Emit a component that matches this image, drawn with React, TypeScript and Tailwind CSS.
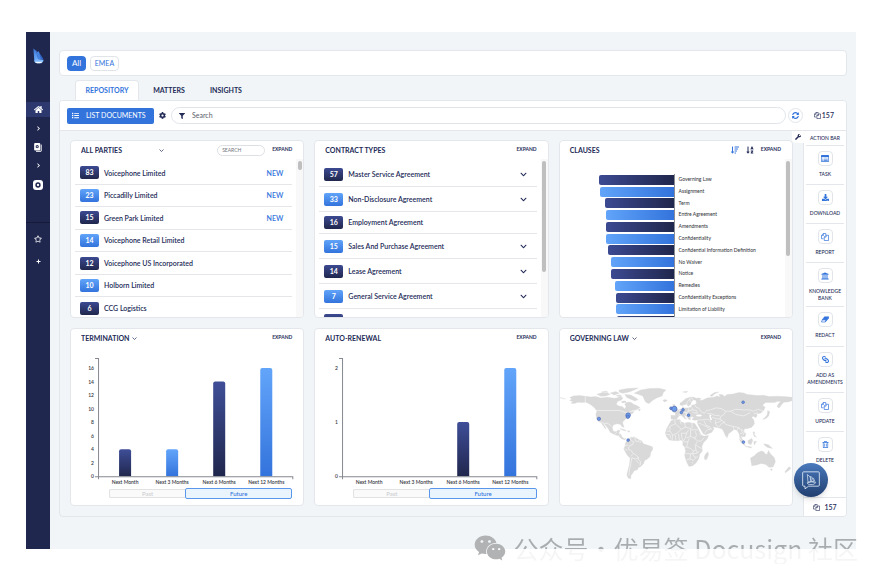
import type { ReactNode } from "react";
import clsx from "clsx";
import {
  FaChevronDown,
  FaChevronRight,
  FaCog,
  FaDownload,
  FaFilter,
  FaHome,
  FaLink,
  FaList,
  FaRegStar,
  FaRegTrashAlt,
  FaSortAlphaDown,
  FaSortAmountDown,
  FaSyncAlt,
  FaUniversity,
  FaWeixin,
  FaWrench,
} from "react-icons/fa";

interface ListItem {
  count: number;
  name: string;
  isNew?: boolean;
  expandable?: boolean;
}

const parties: ListItem[] = [
  { count: 83, name: "Voicephone Limited", isNew: true },
  { count: 23, name: "Piccadilly Limited", isNew: true },
  { count: 15, name: "Green Park Limited", isNew: true },
  { count: 14, name: "Voicephone Retail Limited" },
  { count: 12, name: "Voicephone US Incorporated" },
  { count: 10, name: "Holborn Limited" },
  { count: 6, name: "CCG Logistics" },
];

const contractTypes: ListItem[] = [
  { count: 57, name: "Master Service Agreement", expandable: true },
  { count: 33, name: "Non-Disclosure Agreement", expandable: true },
  { count: 16, name: "Employment Agreement" },
  { count: 15, name: "Sales And Purchase Agreement", expandable: true },
  { count: 14, name: "Lease Agreement", expandable: true },
  { count: 7, name: "General Service Agreement", expandable: true },
];

const clauses = [
  { name: "Governing Law", value: 75 },
  { name: "Assignment", value: 74 },
  { name: "Term", value: 69 },
  { name: "Entire Agreement", value: 68 },
  { name: "Amendments", value: 68 },
  { name: "Confidentiality", value: 68 },
  { name: "Confidential Information Definition", value: 66 },
  { name: "No Waiver", value: 63 },
  { name: "Notice", value: 63 },
  { name: "Remedies", value: 59 },
  { name: "Confidentiality Exceptions", value: 58 },
  { name: "Limitation of Liability", value: 58 },
  { name: "", value: 57 },
];

const months = ["Next Month", "Next 3 Months", "Next 6 Months", "Next 12 Months"];

function CopyIcon({ className }: { className?: string }) {
  return (
    <svg viewBox="0 0 16 16" className={className} fill="none" stroke="currentColor" strokeWidth="1.4" strokeLinejoin="round">
      <path d="M5 11.5H1V5l3.5-4H9.500v3M4.800 1v4.200H1" />
      <path d="M6.500 8 10 4.500h5V15H6.500zM10.200 4.500V8.200H6.500" />
    </svg>
  );
}

function TaskIcon({ className }: { className?: string }) {
  return (
    <svg viewBox="0 0 16 14" className={className} fill="currentColor">
      <path fillRule="evenodd" d="M1.500 0h13A1.500 1.500 0 0 1 16 1.500v11a1.500 1.500 0 0 1-1.500 1.500h-13A1.500 1.500 0 0 1 0 12.500v-11A1.500 1.500 0 0 1 1.500 0zM1.300 4v8.600h13.400V4z" />
      <path d="M2.500 5.500H4v1.200H2.500zM5 5.500h8.500v1.200H5zM2.500 7.800H4V9H2.500zM5 7.800h8.500V9H5zM2.500 10.100H4v1.200H2.500zM5 10.100h8.500v1.200H5z" />
    </svg>
  );
}

function EraserIcon({ className }: { className?: string }) {
  return (
    <svg viewBox="0 0 16 14" className={className} fill="currentColor" stroke="currentColor" strokeLinejoin="round">
      <path d="M7 1.500H15L10.500 7.500H2.500z" />
      <path d="M2.500 7.500H10.500L8.500 12H1z" fill="none" strokeWidth="1.400" />
      <path d="M15 1.500V5L8.500 12 10.500 7.500z" />
    </svg>
  );
}

function BoatLogo() {
  return (
    <svg viewBox="0 0 32 46" className="h-4 w-[11px]" aria-label="Home">
      <defs>
        <linearGradient id="sail" x1="0" y1="0" x2="0" y2="1">
          <stop offset="0" stopColor="#3a72d4" />
          <stop offset="1" stopColor="#6fb1ff" />
        </linearGradient>
      </defs>
      <path d="M1 1 9 8 16 33 4 37z" fill="url(#sail)" />
      <path d="M9 7 13 11 17 9 20 18 25 31 15 34z" fill="#4682e0" />
      <path d="M19 16 24 22 31 34 23 33z" fill="#3068cc" />
      <path d="M3 36C11 31 22 32 31 35 29 41 26 44 20 44H12C7 44 4 41 3 36z" fill="#7db8ff" />
      <path d="M6 40H27C25 43 23 44 20 44H12C9 44 7 42 6 40z" fill="#f4f9ff" />
    </svg>
  );
}

const actions: { label: string; icon: ReactNode; height: string }[] = [
  { label: "TASK", icon: <TaskIcon className="h-[7px] w-2" />, height: "h-[39px]" },
  { label: "DOWNLOAD", icon: <FaDownload className="size-[7px]" />, height: "h-[39px]" },
  { label: "REPORT", icon: <CopyIcon className="size-2" />, height: "h-[39px]" },
  { label: "KNOWLEDGE BANK", icon: <FaUniversity className="size-2" />, height: "h-[44px]" },
  { label: "REDACT", icon: <EraserIcon className="h-[7px] w-2" />, height: "h-[40px]" },
  { label: "ADD AS AMENDMENTS", icon: <FaLink className="size-[7px] rotate-90" />, height: "h-[46px]" },
  { label: "UPDATE", icon: <CopyIcon className="size-2" />, height: "h-[39px]" },
  { label: "DELETE", icon: <FaRegTrashAlt className="size-[7px]" />, height: "h-[39px]" },
];

function Sidebar() {
  return (
    <nav className="flex w-6 shrink-0 flex-col items-center bg-[#20274f] text-white">
      <a href="#home" className="mt-4">
        <BoatLogo />
      </a>
      <a href="#dashboard" aria-label="Dashboard" className="mt-[38px] flex h-[15px] w-full items-center justify-center bg-[#2d386f]">
        <FaHome className="size-[9px]" />
      </a>
      <div className="flex w-full flex-col items-center gap-[11px] border-b border-[#141a38] pt-2 pb-8">
        <button aria-label="Open dashboard menu" className="flex h-[7px] items-center">
          <FaChevronRight className="size-[5px]" />
        </button>
        <button aria-label="Documents" className="flex h-2 items-center">
          <svg viewBox="0 0 24 28" className="h-[9px] w-2">
            <path d="M22 5v20q0 1-1 1H6" fill="none" stroke="#fff" strokeWidth="3" />
            <rect width="19" height="23" rx="3" fill="#fff" />
            <path d="m9.500 6 4.500 2.600v5.400L9.500 16.700 5 14V8.600z" fill="#20274f" />
            <circle cx="9.500" cy="11.300" r="1.800" fill="#fff" />
          </svg>
        </button>
        <button aria-label="Open documents menu" className="flex h-[7px] items-center">
          <FaChevronRight className="size-[5px]" />
        </button>
        <button aria-label="Settings" className="flex h-[10px] items-center">
          <svg viewBox="0 0 30 30" className="size-[10px]">
            <rect width="30" height="30" rx="9" fill="#fff" />
            <circle cx="15" cy="15" r="8" fill="#20274f" />
            <circle cx="15" cy="15" r="3.500" fill="#fff" />
          </svg>
        </button>
      </div>
      <button aria-label="Favourites" className="mt-3">
        <FaRegStar className="size-2" />
      </button>
      <button aria-label="Add" className="mt-4">
        <svg viewBox="0 0 10 10" className="size-[5px]">
          <path d="M5 1v8M1 5h8" stroke="#fff" strokeWidth="2" />
        </svg>
      </button>
    </nav>
  );
}

interface CardProps {
  title: string;
  select?: "wide" | "tight";
  tools?: ReactNode;
  children: ReactNode;
}

function Card({ title, select, tools, children }: CardProps) {
  return (
    <section className="flex h-[178px] min-w-0 flex-col overflow-hidden rounded border border-[#e3e7eb] bg-white">
      <header className="flex h-[18px] shrink-0 items-center pr-[11px] pl-[10px]">
        {select ? (
          <div className={clsx("flex items-center", select === "wide" ? "w-[83px] justify-between" : "gap-[2px]")}>
            <select aria-label={title} className="appearance-none text-[7px] leading-[10px] font-bold outline-none">
              <option>{title}</option>
            </select>
            <svg viewBox="0 0 10 6" className="h-[3px] w-[5px]" fill="none" stroke="currentColor" strokeWidth="1.400">
              <path d="m1 1 4 4 4-4" />
            </svg>
          </div>
        ) : (
          <h2 className="text-[7px] leading-[10px] font-bold">{title}</h2>
        )}
        <div className="ml-auto flex items-center gap-[7px]">
          {tools}
          <button className="text-[5px] font-bold">EXPAND</button>
        </div>
      </header>
      {children}
    </section>
  );
}

function ScrollTrack({ thumb }: { thumb: string }) {
  return (
    <div className="flex w-[7px] shrink-0 justify-center bg-[#f8f8f8] pt-[2px]">
      <div className={clsx("w-1 rounded-full bg-[#bfbfbf]", thumb)} />
    </div>
  );
}

function Count({ value, dark }: { value: number | string; dark: boolean }) {
  return (
    <span
      className={clsx(
        "flex h-[13px] w-[19px] shrink-0 items-center justify-center rounded-xs bg-linear-to-b text-[7px] leading-none font-bold text-white",
        dark ? "from-[#3c4a92] to-[#20274d]" : "from-[#61a4f9] to-[#3373dc]",
      )}
    >
      {value}
    </span>
  );
}

function Parties() {
  return (
    <Card
      title="ALL PARTIES"
      select="wide"
      tools={
        <input
          aria-label="Search parties"
          placeholder="SEARCH"
          className="h-[11px] w-12 rounded-full border border-[#dcdfe3] px-1 text-[5px] outline-none placeholder:text-[#70757d]"
        />
      }
    >
      <div className="flex min-h-0 flex-1">
        <ul className="grid h-[161px] flex-1 grid-rows-7 pt-[3px] pr-1 pl-1">
          {parties.map((p, i) => (
            <li key={p.name} className="flex items-center gap-[5px] border-b border-[#e4e6e9] pr-[9px] pl-[5px] text-[7px] font-semibold">
              <Count value={p.count} dark={i % 2 === 0} />
              {p.name}
              {p.isNew && <span className="ml-auto text-[#3374dc]">NEW</span>}
            </li>
          ))}
        </ul>
        <ScrollTrack thumb="h-[9px]" />
      </div>
    </Card>
  );
}

function ContractTypes() {
  return (
    <Card title="CONTRACT TYPES">
      <div className="flex min-h-0 flex-1">
        <ul className="flex-1 px-1 pt-[3px]">
          {contractTypes.map((c, i) => (
            <li
              key={c.name}
              className={clsx(
                "flex items-center gap-[5px] border-b border-[#e4e6e9] pr-[10px] pl-[5px] text-[7px] font-semibold",
                c.expandable ? "h-[25px]" : "h-[22px]",
              )}
            >
              <Count value={c.count} dark={i % 2 === 0} />
              {c.name}
              {c.expandable && (
                <button aria-label={`Show ${c.name}`} className="ml-auto">
                  <FaChevronDown className="size-[7px]" />
                </button>
              )}
            </li>
          ))}
          <li className="pt-[5px] pl-[5px]">
            <Count value="" dark />
          </li>
        </ul>
        <ScrollTrack thumb="h-[111px]" />
      </div>
    </Card>
  );
}

function Clauses() {
  return (
    <Card
      title="CLAUSES"
      tools={
        <>
          <button aria-label="Sort by amount" className="text-[#3374dc]">
            <FaSortAmountDown className="size-2" />
          </button>
          <button aria-label="Sort by name">
            <FaSortAlphaDown className="size-2" />
          </button>
        </>
      }
    >
      <div className="flex min-h-0 flex-1">
        <div className="flex-1 pt-3">
          <ul className="grid h-[156px] grid-rows-13 pt-[3px]">
            {clauses.map((c, i) => (
              <li key={i} className="flex items-center">
                <div className="flex h-full w-[51%] items-center justify-end border-r border-[#8a8d94]">
                  <div
                    className={clsx(
                      "h-[10px] rounded-l-xs bg-linear-to-r",
                      i % 2 === 0 ? "from-[#3c4a92] to-[#20274d]" : "from-[#61a4f9] to-[#3373dc]",
                    )}
                    style={{ width: `${(c.value / 114) * 100}%` }}
                  />
                </div>
                <span className="pl-1 text-[5px] font-medium whitespace-nowrap text-[#3a3d45]">{c.name}</span>
              </li>
            ))}
          </ul>
        </div>
        <ScrollTrack thumb="h-[95px]" />
      </div>
    </Card>
  );
}

interface BarChartProps {
  id: string;
  ticks: number[];
  values: number[];
}

const BASE = 129;
const SCALE = 108;

function BarChart({ id, ticks, values }: BarChartProps) {
  const max = ticks[ticks.length - 1];
  return (
    <>
      <svg viewBox="0 0 232 141" className="w-full" role="img" aria-label={id}>
        <defs>
          <linearGradient id={`${id}-dark`} x1="0" y1="0" x2="0" y2="1">
            <stop offset="0" stopColor="#3f4e98" />
            <stop offset="1" stopColor="#20274d" />
          </linearGradient>
          <linearGradient id={`${id}-light`} x1="0" y1="0" x2="0" y2="1">
            <stop offset="0" stopColor="#62a5fa" />
            <stop offset="1" stopColor="#3373dc" />
          </linearGradient>
        </defs>
        {values.map((v, i) => {
          const h = (v / max) * SCALE;
          const x = 48 + i * 47;
          return v > 0 ? (
            <path
              key={i}
              d={`M${x} ${BASE}v${2 - h}q0-2 2-2h8q2 0 2 2v${h - 2}z`}
              fill={`url(#${id}-${i % 2 === 0 ? "dark" : "light"})`}
            />
          ) : null;
        })}
        <path d="M24 11.500H27.500V132M24 129.500H221.500V132" fill="none" stroke="#85888f" />
        {ticks.map((t) => (
          <text key={t} x="23" y={BASE + 2 - (t / max) * SCALE} textAnchor="end" fontSize="5" fontWeight="600" fill="#33363d">
            {t}
          </text>
        ))}
        {months.map((m, i) => (
          <text key={m} x={54 + i * 47} y="137" textAnchor="middle" fontSize="5" fontWeight="600" fill="#33363d">
            {m}
          </text>
        ))}
      </svg>
      <div className="mr-[11px] ml-[38px] flex items-center text-[6px] leading-none">
        <button className="h-[9px] flex-5 rounded-l-xs border border-r-0 border-[#e2e2e2] bg-[#fafafa] text-[#c9cbce]">Past</button>
        <button className="h-[11px] flex-7 rounded-xs border border-[#5a97ec] bg-[#eaf4fc] font-medium text-[#3374dc]">Future</button>
      </div>
    </>
  );
}

const land = [
  // north america
  "M27 83 44 87 36 86zM57 82 68 78 85 77 104 79 120 81 135 80 150 84 170 82 190 85 198 84 208 80 216 84 212 90 200 95 196 103 204 108 214 110 222 117 226 110 222 103 228 97 240 97 248 103 256 106 268 113 258 119 246 122 240 126 250 125 246 130 238 134 230 142 222 150 216 156 216 162 220 172 214 171 208 163 198 162 188 165 184 173 187 184 196 186 202 181 208 182 203 191 210 193 213 201 220 207 226 206 222 210 212 207 203 198 190 194 178 187 172 176 160 162 158 163 166 177 162 175 152 160 142 154 137 145 135 133 138 123 132 115 122 106 110 99 104 97 92 98 80 97 70 101 60 100 66 95 56 92 62 88z",
  "M138 73 155 68 170 69 178 73 165 78 150 79zM152 66 166 64 172 67zM178 69 195 65 205 70 190 75zM196 77 206 75 214 79 202 80zM205 60 230 56 262 54 250 60 235 66 215 70 205 66zM222 74 240 75 252 82 262 89 252 93 240 88 228 83zM212 94 224 93 226 98 214 99z",
  "M250 70 270 60 295 56 325 55 346 60 338 68 334 78 318 84 305 92 295 101 286 98 280 88 276 78 262 73zM336 91 344 89 350 92 342 96zM207 176 222 180 226 184 216 181zM229 183 238 184 234 187zM262 119 269 117 266 124z",
  // south america
  "M232 208 240 202 252 202 262 208 272 213 278 222 290 226 305 231 306 239 300 248 298 260 290 268 282 272 278 282 270 290 262 294 260 300 250 303 246 310 240 318 240 327 232 325 228 315 232 300 236 285 238 265 230 257 222 244 219 236 223 228 224 220 228 213z",
  // africa
  "M362 152 376 150 388 149 392 156 402 160 412 157 426 160 432 160 440 172 446 184 452 195 460 199 474 197 470 207 458 220 454 230 455 244 447 254 445 266 436 280 426 288 415 290 411 283 405 268 402 256 405 244 402 232 396 225 397 216 392 211 380 213 368 212 356 211 347 200 344 190 348 176 355 164zM472 246 474 254 469 268 463 271 461 262 465 253z",
  // eurasia
  "M361 136 374 137 374 130 368 127 377 124 386 119 394 116 397 110 400 114 412 114 421 112 424 106 432 104 438 101 436 92 432 88 442 84 452 86 445 91 455 91 470 84 490 82 500 78 510 82 505 74 515 74 522 80 530 74 548 72 565 68 580 69 590 74 605 75 620 77 640 76 655 80 680 79 700 80 726 82 726 92 712 96 700 97 694 104 686 114 680 110 684 102 692 94 680 95 672 98 660 98 645 98 636 106 644 112 640 122 630 130 618 132 620 138 616 144 609 139 603 142 610 150 612 162 604 172 592 176 582 177 580 184 586 192 584 200 576 201 570 196 574 206 580 215 576 215 568 203 566 192 560 182 552 178 544 184 534 192 530 204 525 198 518 182 512 176 500 173 486 171 490 177 484 187 466 195 458 192 450 178 442 164 440 155 444 150 430 151 424 148 430 143 424 140 418 144 420 150 414 148 408 140 400 135 404 144 408 148 402 146 394 138 388 136 382 142 378 148 370 150 361 147z",
  "M388 100 396 94 406 86 418 82 430 82 438 86 434 90 428 90 422 96 420 104 413 109 408 103 402 104 395 107 388 105zM366 104 372 104 376 112 382 120 376 124 366 125 370 116zM358 112 364 112 364 120 358 121zM478 77 492 68 505 66 492 72 484 80zM396 66 411 64 408 68z",
  // pacific islands and australia
  "M652 122 658 126 655 138 647 146 637 149 646 141 651 133zM566 207 574 213 585 227 580 226 570 215zM584 229 604 232 600 235zM592 213 604 206 607 212 602 224 594 222zM610 216 618 214 612 226zM608 186 613 188 611 194 618 202 611 199zM640 222 654 225 666 236 652 233 644 228zM600 265 612 258 620 250 632 244 640 246 644 252 650 254 654 242 660 252 672 264 675 276 668 292 656 293 646 284 632 281 618 286 604 288zM660 298 666 298 663 303zM716 291 722 296 714 303 705 309 704 306z",
];

const borders = [
  "M103 79V98M137 122H208L220 127 232 128 246 122M143 155 160 161 170 160 182 169M191 194 198 187M203 198 208 194",
  "M238 202 240 212 248 216 246 224 236 228 232 238 242 243 246 250 256 256 262 262 264 270 270 276 268 288M252 202 254 214 264 215 266 208M270 213 268 219M223 228 232 226M222 236 230 244M240 260 246 254M243 264 254 268 264 264M243 264 240 282 236 300 234 318M256 272 266 282",
  "M372 150 374 162 360 168 350 178M374 162 392 178 404 172 402 160M388 149 390 160 394 164M404 172 420 176V180H442M424 160V176M358 170V184H348M358 184 366 196 380 190 392 178M346 193 358 195 360 206M366 196 364 211M374 196 376 212M384 192 386 211M392 190 394 206 398 214M392 190 408 190 414 180M408 190 404 204 398 214M408 204 420 200 434 206M420 180V200M434 184 438 196 432 206 442 214 452 214 460 204M446 190 452 198M398 216 412 216 416 206M412 216 408 232 402 232M408 232 420 236 428 244 436 240 434 226 440 216M436 226 448 234 454 236M428 244 426 252 404 252M420 252 418 268 408 270M426 252 440 250 446 244M426 252 432 262 442 262M418 268 428 272 436 264M424 280 428 278M436 240 440 250",
  "M386 120 388 130 384 137M394 117 396 126 388 130 392 138M396 126 406 128 412 126 414 116M406 128 408 136 416 134 422 138M424 112 426 120 412 124M426 120 438 122 440 130M432 104 436 112 446 116 452 126 462 130M426 128 440 130M404 133 412 132M416 140 420 134M462 130 468 122 480 120 496 114 512 116 526 124 540 124 556 118 578 120 596 120 610 124 622 118 640 124M540 124 556 134 580 138 600 128M526 124 520 134 512 138 508 148 518 154 526 164 548 170 560 172 568 178M470 130 482 132 492 136 508 138M484 142 496 146 508 148M456 150 466 148 476 150 482 158M460 152 466 166 480 172M444 160 456 164 466 170 484 178M462 190 470 180 482 178M496 150 494 160 502 172M494 160 506 156 514 152M504 173 512 162 524 156M548 170 550 180M560 182 564 172 572 180 576 190 568 192M572 178 582 186 578 196M610 132 622 128M424 84 428 92M408 104 410 96 422 84M416 86 420 96M444 150 456 150",
];

const places: [number, number, number][] = [
  [144, 147, 5],
  [232, 136, 7],
  [231, 141, 5],
  [232, 211, 4],
  [361, 115, 4],
  [371, 117, 8],
  [392, 128, 4],
  [397, 120, 4],
  [414, 136, 4],
  [578, 97, 4],
  [579, 217, 4],
];

function WorldMap() {
  return (
    <svg viewBox="27 0 699 375" className="mt-[23px] w-full" role="img" aria-label="Governing law by country">
      {land.map((d, i) => (
        <path key={i} d={d} fill="#d9d9d9" stroke="#d9d9d9" />
      ))}
      {borders.map((d, i) => (
        <path key={i} d={d} fill="none" stroke="#fff" strokeWidth="1.500" />
      ))}
      <ellipse cx="445" cy="137" rx="9" ry="3" fill="#fff" />
      <path d="M477 133 483 137 480 141 485 149 480 151 477 143z" fill="#fff" />
      {places.map(([cx, cy, r], i) => (
        <circle key={i} cx={cx} cy={cy} r={r} fill="#5b8fe6" fillOpacity="0.85" stroke="#4d67b5" strokeWidth="2" />
      ))}
    </svg>
  );
}

function ActionBar() {
  return (
    <aside className="relative flex w-[43px] shrink-0 flex-col border-l border-[#e3e7eb] bg-white text-center">
      <button
        aria-label="Configure action bar"
        className="absolute top-0 -left-3 flex size-3 items-center justify-center rounded-bl-sm bg-white"
      >
        <FaWrench className="size-[6px]" />
      </button>
      <h2 className="mx-[2px] h-[15px] border-b border-[#e3e7eb] text-[5px] leading-[15px] font-medium">ACTION BAR</h2>
      {actions.map((a, i) => (
        <button
          key={a.label}
          className={clsx(
            "mx-[2px] flex flex-col items-center gap-[5px] border-[#e3e7eb] pt-[5px] text-[5px] leading-[7px] font-medium",
            i < actions.length - 1 && "border-b",
            a.height,
          )}
        >
          <span className="flex size-[15px] shrink-0 items-center justify-center rounded-sm border border-[#e1e5ea] text-[#3374dc]">
            {a.icon}
          </span>
          {a.label}
        </button>
      ))}
      <div className="mt-auto flex h-[19px] items-center justify-center gap-1 border-t border-[#e3e7eb] text-[7px] font-semibold">
        <CopyIcon className="size-[7px]" />
        157
      </div>
      <button
        aria-label="Open assistant"
        className="absolute bottom-[19px] -left-[10px] flex size-[34px] items-center justify-center rounded-full bg-linear-to-b from-[#4a7abd] to-[#213f70] shadow-md"
      >
        <svg viewBox="0 0 54 56" className="h-[19px] w-[18px]" fill="none" stroke="#e6eef9" strokeWidth="2.500" strokeLinejoin="round">
          <path d="M5 2H49Q52 2 52 5V42Q52 45 49 45H20L9 53V45H5Q2 45 2 42V5Q2 2 5 2z" />
          <path d="M16 10 24 17 27 31 18 33zM26 15 31 20 35 31 28 31zM34 20 39 32M15 35Q27 30 41 34 38 40 32 40H23Q17 40 15 35z" strokeWidth="2" />
        </svg>
      </button>
    </aside>
  );
}

export default function App() {
  return (
    <div className="relative min-h-screen bg-white pt-8 pr-[30px] pb-9 pl-[26px] font-[Lato,sans-serif] text-[#232b57]">
      <div className="flex bg-[#f1f5f8]">
        <Sidebar />
        <main className="min-w-0 flex-1 pt-[18px] pr-[9px] pb-8 pl-[9px]">
          <div className="flex h-[26px] items-center gap-1 rounded border border-[#e3e7eb] bg-white px-[7px] text-[8px] leading-none">
            <button className="h-[15px] w-[19px] rounded-sm bg-[#3374dc] text-white">All</button>
            <button className="h-[15px] w-[29px] rounded-sm border border-[#e1e5ea] text-[7px] text-[#3374dc]">EMEA</button>
          </div>
          <div className="mt-1 flex h-5 pl-4 text-[7px] font-bold">
            <button className="w-16 rounded-t border border-b-0 border-[#e3e7eb] bg-white text-[#3374dc]">REPOSITORY</button>
            <button className="w-[60px]">MATTERS</button>
            <button className="w-[54px]">INSIGHTS</button>
          </div>
          <div className="overflow-hidden rounded border border-[#e3e7eb]">
            <div className="flex h-[30px] items-center border-b border-[#e3e7eb] bg-white pr-3 pl-[7px]">
              <button className="flex h-4 w-[87px] shrink-0 items-center gap-[7px] rounded-xs bg-[#3374dc] pl-[5px] text-[7px] text-white">
                <FaList className="size-[7px]" />
                LIST DOCUMENTS
              </button>
              <button aria-label="Settings" className="px-[5px]">
                <FaCog className="size-[7px]" />
              </button>
              <label className="mr-[2px] flex h-[17px] flex-1 items-center gap-[7px] rounded-full border border-[#e1e5ea] pl-[7px]">
                <FaFilter className="size-[6px]" />
                <input aria-label="Search documents" placeholder="Search" className="min-w-0 flex-1 text-[7px] outline-none placeholder:text-[#5b606b]" />
              </label>
              <button aria-label="Refresh" className="flex size-[15px] items-center justify-center rounded-full border border-[#e1e5ea] text-[#3374dc]">
                <FaSyncAlt className="size-[7px]" />
              </button>
              <div className="ml-[11px] flex items-center gap-[1px] text-[7px] font-semibold">
                <CopyIcon className="size-[7px]" />
                157
              </div>
            </div>
            <div className="flex">
              <div className="grid min-w-0 flex-1 grid-cols-3 gap-[10px] px-[10px] pt-[9px] pb-[10px]">
                <Parties />
                <ContractTypes />
                <Clauses />
                <Card title="TERMINATION" select="tight">
                  <BarChart id="termination" ticks={[0, 2, 4, 6, 8, 10, 12, 14, 16]} values={[4, 4, 14, 16]} />
                </Card>
                <Card title="AUTO-RENEWAL">
                  <BarChart id="renewal" ticks={[0, 1, 2]} values={[0, 0, 1, 2]} />
                </Card>
                <Card title="GOVERNING LAW" select="tight">
                  <WorldMap />
                </Card>
              </div>
              <ActionBar />
            </div>
          </div>
        </main>
      </div>
      <div className="pointer-events-none absolute right-7 bottom-[21px] flex items-center gap-2">
        <FaWeixin className="size-8 text-[#b0b2b3]" />
        <span className="bg-[linear-gradient(#a9acae_17px,#f5f5f5_17px)] bg-clip-text font-['Noto_Sans_CJK_SC',sans-serif] text-[25px] leading-8 whitespace-nowrap text-transparent">
          公众号·优易签 Docusign 社区
        </span>
      </div>
    </div>
  );
}
